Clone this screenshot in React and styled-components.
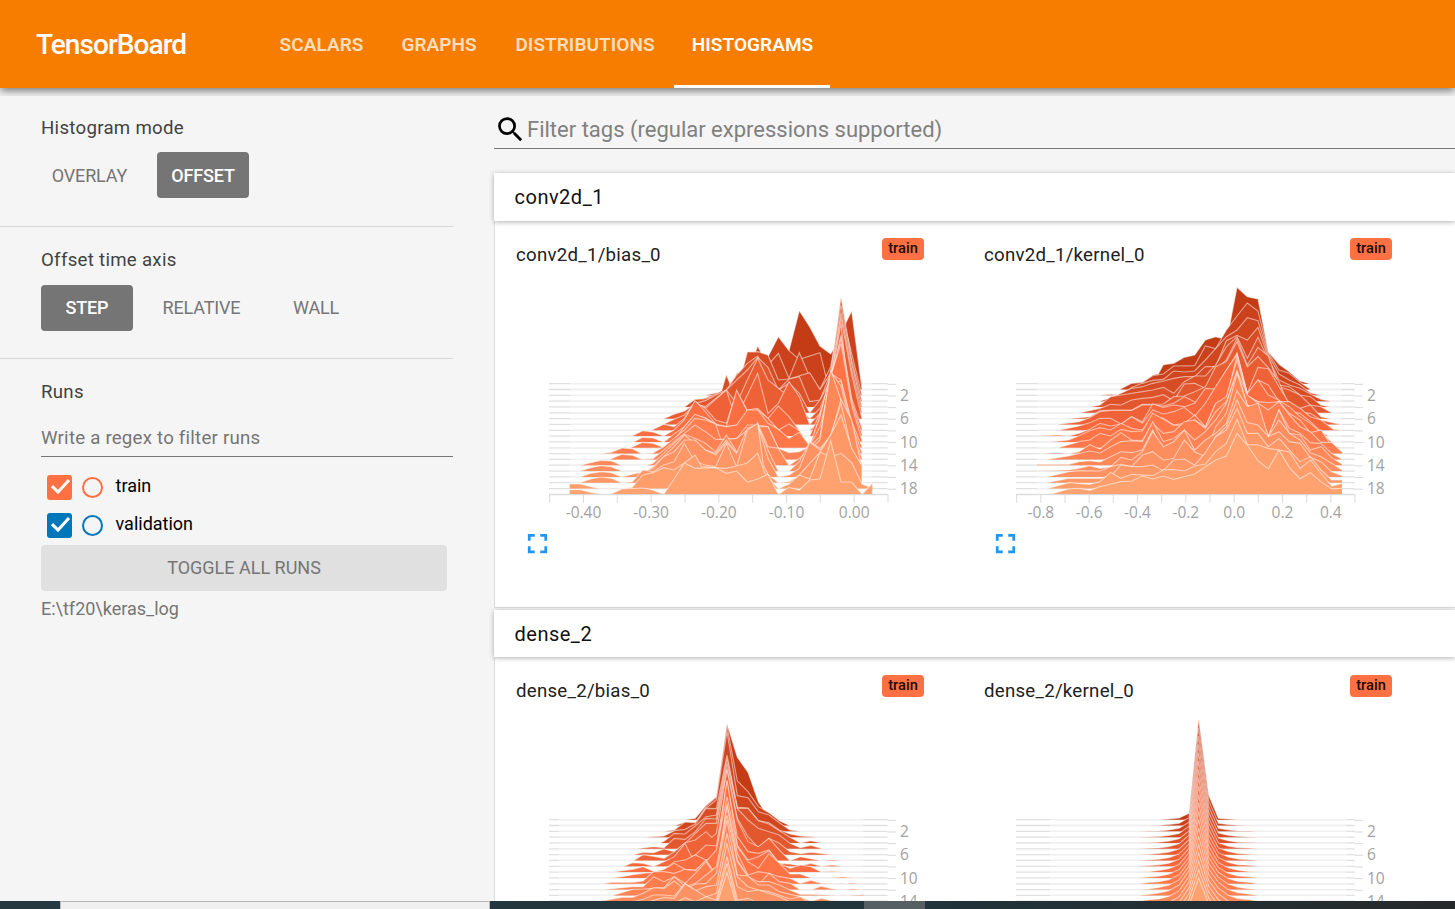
import React from "react";
import styled, { createGlobalStyle } from "styled-components";
import { MdSearch, MdFullscreen } from "react-icons/md";

const GlobalStyle = createGlobalStyle`
  * { box-sizing: border-box; }
  body { margin: 0; background: #f5f5f5; font-family: Roboto, sans-serif; overflow: hidden; }
`;

const Page = styled.div`
  width: 1455px;
  height: 909px;
  display: flex;
  flex-direction: column;
  overflow: hidden;
`;

const Toolbar = styled.header`
  flex: 0 0 88px;
  display: flex;
  align-items: center;
  padding-left: 36px;
  background: #f77d00;
  color: #fff;
  position: relative;
  box-shadow: 0 3px 8px rgba(0, 0, 0, 0.5);
  clip-path: inset(0 0 -8px 0);
`;

const Brand = styled.div`
  width: 225.5px;
  font-size: 28px;
  font-weight: 500;
  letter-spacing: -0.95px;
`;

const Tabs = styled.nav`
  display: flex;
  height: 100%;
`;

const Tab = styled.div`
  display: flex;
  align-items: center;
  justify-content: center;
  width: ${(p) => p.$width}px;
  padding-top: 3px;
  padding-left: ${(p) => (p.$active ? 2 : 0)}px;
  font-size: 19px;
  font-weight: 600;
  letter-spacing: 0.05px;
  white-space: nowrap;
  color: ${(p) => (p.$active ? "#fff" : "rgba(255,255,255,0.76)")};
  border-bottom: 3px solid ${(p) => (p.$active ? "#fff" : "transparent")};
`;

const Body = styled.div`
  flex: 1;
  min-height: 0;
  display: flex;
`;

const Sidebar = styled.aside`
  width: 494px;
  padding-right: 41px;
  flex: none;
`;

const Group = styled.section`
  height: ${(p) => p.$height}px;
  padding: ${(p) => p.$top}px 0 0 41px;
  border-bottom: ${(p) => (p.$last ? "0" : "1px solid #d8d8d8")};
`;

const Heading = styled.h3`
  margin: 0;
  height: 24px;
  line-height: 24px;
  font-size: 18.67px;
  font-weight: 400;
  letter-spacing: 0.28px;
  color: #424242;
`;

const ButtonRow = styled.div`
  display: flex;
  gap: 19px;
  margin-top: ${(p) => p.$top}px;
`;

const ModeButton = styled.button`
  width: ${(p) => p.$width}px;
  height: 46px;
  padding: 0 0 ${(p) => p.$lift || 0}px;
  border: 0;
  border-radius: 4px;
  font: ${(p) => (p.$selected ? 500 : 400)} 18px Roboto, sans-serif;
  letter-spacing: -0.15px;
  color: ${(p) => (p.$selected ? "#fff" : "#757575")};
  background: ${(p) => (p.$selected ? "#757575" : "transparent")};
`;

const RegexField = styled.div`
  margin-top: 17px;
  height: 36px;
  line-height: 34px;
  font-size: 18.67px;
  letter-spacing: 0.22px;
  color: #757575;
  border-bottom: 1px solid #757575;
`;

const RunList = styled.div`
  padding-top: 11px;
`;

const Run = styled.div`
  display: flex;
  align-items: center;
  height: 38px;
  padding-left: 6px;
  font-size: 18px;
  color: #000;
`;

const Checkbox = styled.span`
  width: 25px;
  height: 25px;
  border-radius: 3px;
  background: ${(p) => p.$color};
  margin-right: 10px;
  svg { display: block; }
`;

const Ring = styled.span`
  width: 21px;
  height: 21px;
  border: 2px solid ${(p) => p.$color};
  border-radius: 50%;
  margin-right: 12.5px;
`;

const RunName = styled.span`
  padding-bottom: 3px;
`;

const ToggleAll = styled.button`
  display: block;
  width: 406px;
  height: 46px;
  margin-top: 1px;
  padding: 0 0 2px;
  border: 0;
  border-radius: 4px;
  background: #e0e0e0;
  color: #757575;
  font: 400 18px Roboto, sans-serif;
`;

const LogDir = styled.div`
  margin-top: 6px;
  line-height: 24px;
  font-size: 18px;
  color: #757575;
`;

const Main = styled.main`
  flex: 1;
  min-width: 0;
`;

const Search = styled.div`
  display: flex;
  align-items: center;
  height: 61px;
  margin-bottom: 24px;
  padding-top: 22px;
  border-bottom: 1px solid #757575;
  font-size: 22px;
  color: #808080;
  svg { color: #000; flex: none; margin-right: 0; }
`;

const CategoryHeader = styled.div`
  position: relative;
  height: ${(p) => p.$height}px;
  line-height: 48px;
  padding-left: 20.5px;
  background: #fff;
  font-size: 20px;
  letter-spacing: 0.5px;
  color: #111;
  box-shadow: 0 1px 5px rgba(0, 0, 0, 0.32);
`;

const CategoryBody = styled.div`
  display: flex;
  height: 387px;
  margin-bottom: 2px;
  padding-top: ${(p) => p.$top}px;
  background: #fff;
  border: 1px solid #dcdcdc;
  border-right: 0;
  border-top: 0;
`;

const Card = styled.article`
  width: 468px;
  flex: none;
  display: flex;
  flex-direction: column;
`;

const CardTitle = styled.div`
  display: flex;
  justify-content: space-between;
  height: 59px;
  padding: 17px 39px 0 21px;
  font-size: 18.67px;
  letter-spacing: 0.25px;
  color: #212121;
  line-height: ${(p) => p.$line}px;
`;

const Badge = styled.span`
  width: 42px;
  height: 22px;
  border-radius: 4px;
  background: #ff7043;
  color: #210b04;
  font-size: 14.67px;
  font-weight: 500;
  letter-spacing: 0;
  line-height: 21px;
  text-align: center;
`;

const ChartSvg = styled.svg`
  display: block;
  margin-left: 35px;
  flex: none;
`;

const Expand = styled.div`
  margin: -43px 0 0 26px;
  color: #2196f3;
  svg { display: block; }
`;

const Taskbar = styled.footer`
  position: absolute;
  left: 0;
  top: 901px;
  width: 1455px;
  height: 8px;
  display: flex;
  background: linear-gradient(90deg, #263941, #21333b 65%, #26292a);
`;

const TaskWindow = styled.div`
  width: ${(p) => p.$width}px;
  margin-left: ${(p) => p.$gap}px;
  background: ${(p) => (p.$light ? "#f0f0f0" : "#566064")};
  border: ${(p) => (p.$light ? "1px solid #b9b9b9" : "0")};
  border-bottom: 0;
`;

const GAP = 17.48;

const biasConv = `
683,311 714,260 745,225 777,212 808,92 839,140 870,198 902,222 918,195 933,150 965,200 996,311
637,328 652,290 683,245 714,230 745,170 777,212 808,238 870,218 888,290 902,270 920,190 933,170 947,130 965,93 996,328
526,346 557,339 575,336 589,325 620,285 637,272 652,218 668,238 683,198 700,230 714,255 745,220 777,295 808,218 839,290 870,328 902,260 933,90 965,220 996,346
500,363 557,342 575,332 589,284 604,322 620,280 637,275 652,216 683,215 714,225 745,300 777,297 839,278 870,328 902,280 933,52 965,240 996,363
463,381 495,358 526,356 557,349 589,330 620,285 652,250 683,228 714,290 745,330 777,297 808,290 839,365 870,360 902,280 933,75 965,250 996,381
463,398 495,370 526,362 557,345 589,330 620,300 652,270 683,232 714,262 745,330 777,310 808,340 839,398 870,360 902,300 933,98 965,270 996,398
401,416 432,403 463,393 495,372 526,380 557,355 589,330 620,370 652,300 683,235 714,300 733,315 777,350 808,380 839,416 870,385 902,300 933,113 965,285 996,416
401,433 432,418 463,405 495,370 526,385 557,358 589,330 604,375 620,410 652,345 683,280 714,400 745,370 777,305 808,350 839,433 870,400 902,305 933,130 965,433 996,433
364,451 401,433 432,440 463,415 495,365 526,385 557,420 589,430 620,335 652,390 683,385 714,415 745,378 777,410 808,451 839,451 870,420 902,310 933,165 965,355 996,445
275,468 307,467 338,452 369,456 401,468 432,450 463,420 495,362 526,395 557,432 589,440 620,330 652,395 683,395 714,420 745,450 777,432 808,452 820,468 839,468 870,400 902,300 933,175 965,365 996,462
310,486 338,472 369,474 401,486 432,462 463,440 495,405 526,413 557,432 573,442 620,435 652,395 683,390 714,415 745,450 777,478 808,460 826,486 843,486 870,410 902,290 933,190 965,375 996,482
301,503 338,487 369,490 401,503 432,480 463,440 495,403 526,415 557,435 589,440 620,435 652,390 683,390 714,430 745,448 777,475 808,457 839,497 870,410 902,280 933,300 965,425 996,500
210,521 244,517 276,504 307,506 335,521 369,519 401,500 432,475 463,450 495,415 526,420 557,432 573,480 620,475 652,435 683,435 714,440 745,505 777,518 808,515 839,498 870,440 902,310 933,303 965,435 996,518
240,538 276,523 307,526 335,538 369,536 401,510 432,485 463,460 495,435 526,455 557,478 589,478 620,475 652,450 683,440 714,440 745,505 777,518 808,515 839,500 870,470 902,275 933,318 965,450 996,535
150,556 182,548 213,541 244,543 275,556 350,556 369,550 401,520 432,490 463,463 495,475 526,490 557,515 589,465 620,515 652,520 683,430 714,500 745,505 777,556 808,535 839,510 870,480 902,270 933,360 965,470 996,552
150,573 182,563 213,557 244,560 275,573 350,573 369,560 401,530 432,500 463,465 495,490 526,510 557,520 589,480 620,520 652,515 683,435 714,510 745,573 777,573 808,545 839,485 870,505 902,470 933,358 965,420 996,568
150,591 182,580 213,575 244,578 275,591 338,575 369,565 401,530 432,515 463,480 495,480 526,510 557,525 589,487 620,520 652,445 683,435 714,535 745,591 777,585 808,565 839,487 870,510 902,465 933,370 965,510 996,588
150,608 182,597 213,591 244,595 275,608 307,605 338,570 369,575 401,555 432,545 463,490 495,545 526,555 557,560 589,490 620,560 652,450 683,430 700,555 714,583 745,608 777,605 808,585 839,550 870,517 902,465 933,405 965,505 996,558
119,612 150,612 182,620 213,626 276,626 307,622 338,585 369,578 401,563 432,570 463,549 495,525 515,560 557,563 589,565 620,558 652,549 683,520 705,580 745,626 777,612 808,585 839,597 870,517 902,530 933,520 965,548 996,612 1027,624
119,629 150,629 182,637 213,643 240,643 276,627 338,624 369,630 401,643 432,597 463,549 495,565 557,563 589,580 620,573 652,606 683,597 714,583 745,643 777,622 808,630 839,600 870,597 902,482 933,606 965,606 996,643 1027,610`;

const kernelConv = `
405,341 437,335 458,315 475,312 490,284 521,280 553,262 584,255 616,210 647,200 665,205 688,170 711,52 742,80 774,87 805,245 837,283 868,305 900,333 930,341
360,358 395,340 427,337 458,317 490,312 521,288 584,287 616,228 647,236 679,180 711,138 742,99 774,123 805,248 837,300 868,310 900,337 931,358
300,376 332,373 363,376 395,352 427,340 458,331 490,328 521,303 553,306 584,303 616,270 647,236 679,200 711,180 742,143 774,152 805,255 837,312 868,330 900,345 931,368 960,376
300,393 332,383 363,370 395,355 427,350 458,340 490,333 521,325 553,320 584,320 616,290 647,290 679,212 711,196 742,210 774,172 805,265 837,330 868,345 900,355 931,372 963,388 990,393
270,411 300,405 332,380 363,375 427,365 458,360 490,352 521,370 553,335 584,318 616,318 647,285 679,230 711,200 742,265 774,202 805,270 837,345 868,350 900,375 931,380 963,405 990,411
240,428 300,415 332,403 363,405 395,390 427,385 458,382 490,374 521,392 553,342 584,340 616,355 647,300 679,270 711,205 742,285 774,232 805,258 837,350 868,360 900,375 931,405 963,410 995,428
205,446 269,440 300,422 332,421 395,421 427,403 490,402 521,380 553,378 584,365 616,350 647,290 679,275 711,215 742,290 774,260 805,293 837,335 868,410 900,415 931,405 963,440 990,446
175,463 237,455 269,443 300,425 332,421 395,421 427,405 458,405 490,408 521,400 553,380 584,395 616,415 647,355 679,300 711,250 742,370 774,292 805,296 837,350 868,400 900,428 931,430 963,450 1020,463
175,481 237,468 269,458 300,445 332,445 363,462 395,440 427,455 458,402 490,412 521,405 553,410 584,400 616,355 647,357 679,355 711,250 742,375 774,330 805,345 837,395 868,395 900,415 931,440 963,450 1000,478 1026,481
110,498 174,495 206,498 237,490 269,478 300,460 332,468 363,462 395,440 427,460 458,420 490,432 521,425 553,412 584,438 616,400 647,350 679,300 711,255 742,370 774,330 805,375 837,390 868,425 900,430 931,455 963,485 985,498
150,516 206,510 237,497 269,482 300,473 332,480 363,460 395,475 427,480 458,440 490,445 521,465 553,460 584,435 616,470 647,400 679,385 711,258 742,378 774,395 805,420 837,392 868,410 900,440 931,460 963,487 995,516
174,533 237,515 269,510 300,490 332,498 363,478 395,485 427,483 458,430 490,447 521,466 553,465 584,450 616,472 647,400 679,380 711,270 742,378 774,395 805,398 837,395 868,430 900,450 931,488 963,480 995,528 1026,533
110,551 174,548 206,551 237,545 269,524 300,537 332,510 363,488 395,510 427,512 458,460 490,490 521,485 553,455 584,450 616,475 647,425 679,395 711,303 742,375 774,400 805,420 837,395 868,435 900,470 931,485 963,517 995,517 1026,546
143,568 206,558 269,543 300,549 332,530 363,515 395,512 427,515 458,455 490,515 521,505 553,480 584,510 616,485 647,450 679,400 711,305 742,405 774,420 805,498 837,420 868,475 900,490 931,518 963,520 995,550 1026,568
111,583 206,583 237,575 269,572 300,576 332,560 363,545 395,548 427,540 458,480 490,550 521,535 553,490 584,540 616,560 647,470 679,430 711,310 742,405 774,430 805,500 837,420 868,490 900,495 931,540 963,530 995,563 1026,582
111,603 206,600 237,595 269,587 300,595 332,590 363,562 395,570 427,545 458,485 490,530 521,515 553,480 584,540 616,510 647,490 679,460 711,362 742,410 774,400 805,500 837,450 868,490 900,510 931,548 963,560 995,580 1026,600
140,621 206,605 237,602 300,603 332,590 363,583 395,590 427,555 458,545 490,570 521,565 553,510 584,545 616,560 647,500 679,470 711,390 742,458 774,465 805,500 837,485 868,515 900,520 931,562 963,575 995,605 1026,617
140,638 206,625 269,625 300,625 332,618 363,585 395,590 427,590 458,585 490,602 521,570 553,567 584,585 616,548 647,500 679,480 711,415 742,490 774,490 805,530 837,505 868,540 900,575 931,560 963,600 995,630 1026,630
140,656 206,638 269,643 300,635 332,607 363,625 395,613 458,617 490,600 521,598 553,603 584,588 616,582 647,545 679,520 711,448 742,523 774,525 805,535 868,545 900,595 931,570 963,610 995,648 1026,640
150,673 206,657 237,655 269,661 300,650 363,635 395,633 427,618 458,627 490,618 521,628 584,612 616,590 647,570 679,558 711,490 742,525 774,572 805,597 837,540 868,592 900,626 931,608 963,635 995,657 1026,655`;

const biasDense = `
465,359 496,355 528,316 559,290 591,72 622,172 654,217 685,305 700,328 717,340 748,359
433,377 465,367 496,368 528,320 559,292 591,78 622,243 654,275 685,320 717,338 748,362 780,377
402,394 433,390 465,366 496,368 528,325 559,300 591,95 622,287 654,293 685,335 717,345 748,368 780,390 810,394
345,412 402,408 433,392 465,388 496,372 528,325 559,326 591,165 622,322 654,324 685,362 717,368 748,390 780,402 811,408 865,412
390,429 402,424 433,400 465,402 496,378 528,350 559,345 591,175 622,325 654,325 685,362 717,372 748,392 780,412 811,429 843,422 875,429
310,447 371,440 402,443 433,415 465,418 496,395 528,355 559,357 591,190 622,326 654,360 685,385 717,395 748,405 780,430 811,443 843,436 880,447
310,464 339,457 371,458 402,447 433,455 465,430 496,400 528,370 559,370 591,205 622,355 654,410 685,443 717,415 748,430 780,455 811,461 843,457 905,464
310,482 339,464 371,469 402,475 433,455 465,428 496,420 528,395 545,412 559,400 591,210 622,360 654,425 685,440 717,415 748,450 780,482 811,470 874,482 906,479 937,482
280,499 308,488 339,490 371,499 402,485 433,470 465,430 485,470 496,465 528,435 559,438 591,245 622,410 654,455 685,460 717,450 748,490 780,492 811,497 843,490 874,499 906,495 937,499
245,517 276,512 308,508 339,500 371,514 402,510 433,485 465,480 496,465 528,480 559,470 591,240 622,435 654,480 685,470 717,452 748,490 780,505 811,495 843,500 874,516 906,514 937,517
245,534 276,530 308,524 339,520 371,517 402,508 433,490 465,508 496,510 528,485 559,450 591,290 622,440 654,485 685,505 717,460 748,490 780,522 811,522 843,534 906,534 937,531 969,534
213,552 245,547 308,547 339,543 371,515 402,515 433,520 465,508 496,512 528,480 559,525 591,310 622,460 654,525 685,515 717,520 748,530 780,535 811,550 843,541 874,550 937,552 969,549 995,552
215,569 276,563 308,560 339,560 371,530 402,545 433,530 465,550 496,520 528,485 559,530 591,320 622,480 654,530 685,555 717,520 748,545 780,550 811,569 843,569 874,559 906,566 937,569 969,566 1000,569
245,587 308,568 339,567 371,565 402,563 433,530 465,560 496,550 528,525 559,500 591,345 622,485 654,530 685,545 717,545 748,555 780,570 811,583 843,583 937,587 1000,584
210,604 276,592 308,592 339,580 371,563 402,565 433,543 465,570 496,552 528,550 559,520 591,360 622,525 654,528 685,555 717,555 748,575 811,590 843,604 874,595 906,602 940,604
276,614 339,598 371,585 402,585 433,588 465,550 496,572 528,560 559,555 591,400 622,530 654,560 685,570 717,575 780,597 811,590 843,612 1000,622
276,630 339,610 402,592 433,595 465,552 496,570 528,590 559,580 591,430 622,560 654,575 685,570 748,590 811,620 1000,639
339,640 402,620 433,610 465,593 496,605 528,590 559,600 591,470 622,600 654,595 685,610 748,630 1000,657
402,640 433,630 496,620 559,610 591,490 622,615 654,620 1000,674
433,670 528,640 560,615 591,517 622,622 700,670 1000,692`;

const parse = (text) =>
  text.trim().split("\n").map((line) => line.trim().split(" ").map((p) => p.split(",").map(Number)));

const kernelDense = Array.from({ length: 20 }, (_, k) => {
  const base = 359 + GAP * k;
  const t = Math.min(k / 13, 1);
  const wobble = (k % 3) * 1.2;
  return [
    [415, 0], [445, 2 * t + wobble * t], [476, 7 * t], [506, 2 + 12 * t], [537, 5 + 26 * t],
    [567, 19 + 56 * t], [596, 301 - 7.6 * k], [626, 74 + 6 * t], [655, 4 + 36 * t],
    [684, 2 + 16 * t], [714, 8 * t], [745, 3 * t + wobble * t], [775, 0],
  ].map(([x, h]) => [x, base - h]);
});

const mix = (a, b, t) => a.map((v, i) => Math.round(v + (b[i] - v) * t));
const layerColor = (k) => {
  const dark = [196, 60, 22], mid = [255, 112, 67], light = [255, 162, 112];
  const c = k < 9.5 ? mix(dark, mid, k / 9.5) : mix(mid, light, (k - 9.5) / 9.5);
  return `rgb(${c.join(",")})`;
};

/* Offset histogram: coordinates are thirds of a pixel. */
function Histogram({ layers, base, left, right, min, max, view, ticks, step, labels }) {
  const bottom = base + GAP * 19;
  return (
    <ChartSvg width="400" height="290" viewBox={`${view[0]} ${view[1]} 1200 870`}>
      {layers.map((_, k) => (
        <line key={k} x1={left} x2={right} y1={base + GAP * k} y2={base + GAP * k} stroke="#e0e0e0" strokeWidth="3.8" />
      ))}
      {layers.map((_, k) => k % 2 === 0 && (
        <line key={k} x1={right} x2={right + 25} y1={base + 2 + GAP * k} y2={base + 2 + GAP * k} stroke="#dadada" strokeWidth="3" />
      ))}
      {layers.map((pts, k) => {
        const b = base + GAP * k;
        const shape = pts.map((p) => p.join(",")).join(" L");
        const first = pts[0][0], last = pts[pts.length - 1][0];
        const lead = first > min ? `${min},${b} L${first},${b} L` : "";
        const tail = last < max ? ` L${last},${b} L${max},${b}` : "";
        return (
          <g key={k}>
            <path d={`M${first},${b} L${shape} L${last},${b} Z`} fill={layerColor(k)} />
            <path d={`M${lead}${shape}${tail}`} fill="none" stroke="#fff" strokeOpacity="0.52" strokeWidth="3.4" />
          </g>
        );
      })}
      <line x1={left} x2={right} y1={bottom + 1} y2={bottom + 1} stroke="#dadada" strokeWidth="3" />
      {Array.from({ length: ticks }, (_, i) => (
        <line key={i} x1={left + 2 + i * step} x2={left + 2 + i * step} y1={bottom} y2={bottom + 25} stroke="#dadada" strokeWidth="3" />
      ))}
      <g fontFamily="Open Sans, sans-serif" fontSize="46.5" fill="#a2a2a2">
        {labels.map((label, i) => (
          <text key={label} x={left + 2 + step * (1 + i * 2)} y={bottom + 70} textAnchor="middle">{label}</text>
        ))}
        {[2, 6, 10, 14, 18].map((n) => (
          <text key={n} x={right + 37} y={base + GAP * n + 17}>{n}</text>
        ))}
      </g>
    </ChartSvg>
  );
}

const wide = ["-0.40", "-0.30", "-0.20", "-0.10", "0.00"];
const narrow = ["-0.8", "-0.6", "-0.4", "-0.2", "0.0", "0.2", "0.4"];

const categories = [
  {
    name: "conv2d_1",
    header: 48,
    top: 0,
    line: 35,
    cards: [
      { tag: "conv2d_1/bias_0", layers: parse(biasConv), base: 311, left: 57, right: 1073, min: 119, max: 1027, view: [0, 0], ticks: 11, step: 101.5, labels: wide },
      { tag: "conv2d_1/kernel_0", layers: parse(kernelConv), base: 341, left: 48, right: 1064, min: 111, max: 1026, view: [-6, 30], ticks: 15, step: 72.5, labels: narrow },
    ],
  },
  {
    name: "dense_2",
    header: 47,
    top: 1,
    line: 33,
    cards: [
      { tag: "dense_2/bias_0", layers: parse(biasDense), base: 359, left: 57, right: 1073, min: 87, max: 1000, view: [0, 51], ticks: 11, step: 101.5, labels: [] },
      { tag: "dense_2/kernel_0", layers: kernelDense, base: 359, left: 48, right: 1064, min: 150, max: 1040, view: [-6, 51], ticks: 15, step: 72.5, labels: [] },
    ],
  },
];

const runs = [
  { name: "train", color: "#ff7043" },
  { name: "validation", color: "#0077bb" },
];

export default function App() {
  return (
    <Page>
      <GlobalStyle />
      <Toolbar>
        <Brand>TensorBoard</Brand>
        <Tabs>
          <Tab $width={120}>SCALARS</Tab>
          <Tab $width={115}>GRAPHS</Tab>
          <Tab $width={177}>DISTRIBUTIONS</Tab>
          <Tab $width={156} $active>HISTOGRAMS</Tab>
        </Tabs>
      </Toolbar>
      <Body>
        <Sidebar>
          <Group $height={139} $top={28}>
            <Heading>Histogram mode</Heading>
            <ButtonRow $top={12}>
              <ModeButton $width={97}>OVERLAY</ModeButton>
              <ModeButton $width={92} $selected>OFFSET</ModeButton>
            </ButtonRow>
          </Group>
          <Group $height={132} $top={21}>
            <Heading>Offset time axis</Heading>
            <ButtonRow $top={13}>
              <ModeButton $width={92} $lift={1} $selected>STEP</ModeButton>
              <ModeButton $width={99} $lift={1}>RELATIVE</ModeButton>
              <ModeButton $width={92} $lift={1}>WALL</ModeButton>
            </ButtonRow>
          </Group>
          <Group $height={300} $top={21} $last>
            <Heading>Runs</Heading>
            <RegexField>Write a regex to filter runs</RegexField>
            <RunList>
              {runs.map((run) => (
                <Run key={run.name}>
                  <Checkbox $color={run.color}>
                    <svg width="25" height="25" viewBox="0 0 25 25">
                      <path d="M5 11.2 L11 17 L22 5" fill="none" stroke="#fff" strokeWidth="3" />
                    </svg>
                  </Checkbox>
                  <Ring $color={run.color} />
                  <RunName>{run.name}</RunName>
                </Run>
              ))}
            </RunList>
            <ToggleAll>TOGGLE ALL RUNS</ToggleAll>
            <LogDir>E:\tf20\keras_log</LogDir>
          </Group>
        </Sidebar>
        <Main>
          <Search>
            <MdSearch size={33} />
            Filter tags (regular expressions supported)
          </Search>
          {categories.map((category) => (
            <section key={category.name}>
              <CategoryHeader $height={category.header}>{category.name}</CategoryHeader>
              <CategoryBody $top={category.top}>
                {category.cards.map(({ tag, ...chart }) => (
                  <Card key={tag}>
                    <CardTitle $line={category.line}>
                      <span>{tag}</span>
                      <Badge>train</Badge>
                    </CardTitle>
                    <Histogram {...chart} />
                    <Expand><MdFullscreen size={33} /></Expand>
                  </Card>
                ))}
              </CategoryBody>
            </section>
          ))}
        </Main>
      </Body>
      <Taskbar>
        <TaskWindow $gap={60} $width={430} $light />
        <TaskWindow $gap={374} $width={61} />
      </Taskbar>
    </Page>
  );
}
